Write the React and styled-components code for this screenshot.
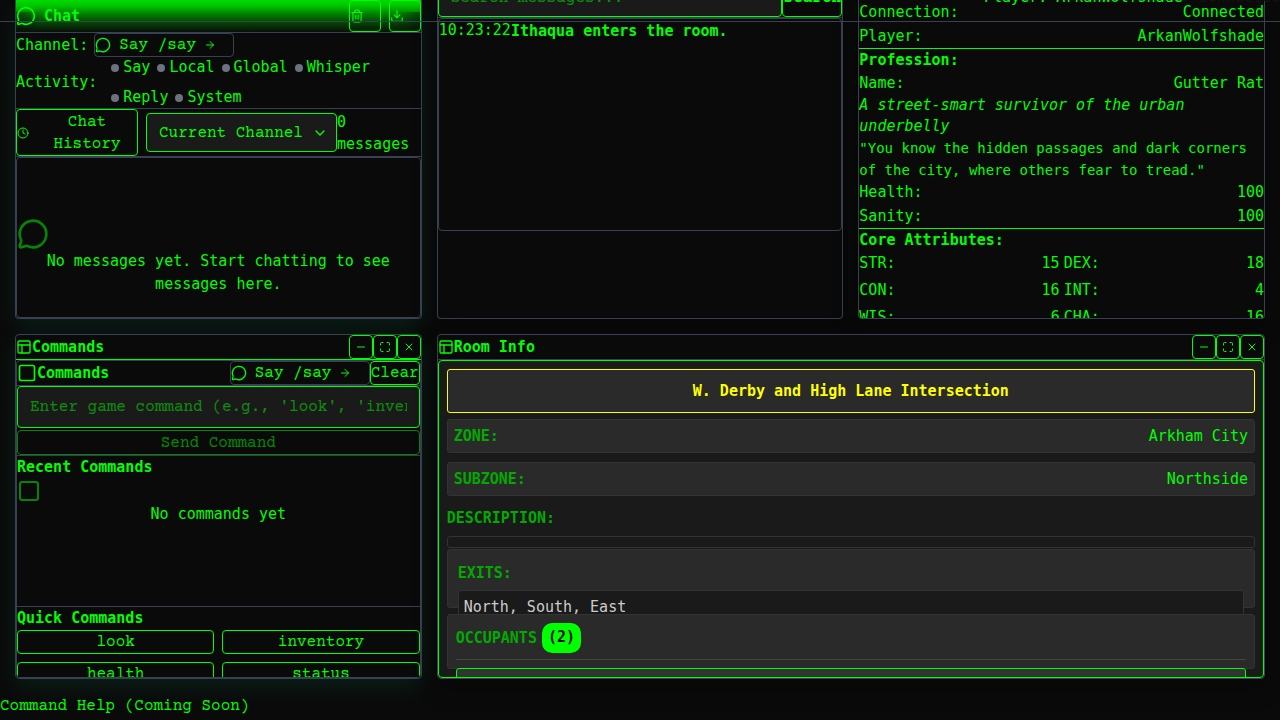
import React from "react";
import styled, { createGlobalStyle } from "styled-components";
import {
  MessageCircle, Trash2, Download, ArrowRight, Clock, ChevronDown,
  PanelsTopLeft, Minus, Maximize, X, Square,
} from "lucide-react";

const GREEN = "#00ff00";
const LINE = "#374151";
const BG = "#0a0a0a";
const SANS_MONO = '"DejaVu Sans Mono", monospace';
const SLAB_MONO = '"Courier Prime", FreeMono, "Nimbus Mono PS", "Liberation Mono", monospace';

const Global = createGlobalStyle`
  * { box-sizing: border-box; }
  body { margin: 0; background: ${BG}; color: ${GREEN}; font: 15px/23px ${SANS_MONO}; }
  button, input, select { font: 16px/22px ${SLAB_MONO}; color: ${GREEN}; }
  h2, h3, h4, p, dl, dd, dt, ul { margin: 0; padding: 0; font-size: 15px; }
  svg { flex: none; }
`;

const Page = styled.div`
  position: relative;
  height: 100vh;
  display: flex;
  flex-direction: column;
  overflow: hidden;
`;

const StatusBar = styled.header`
  position: absolute;
  inset: 0 0 auto 0;
  height: 22px;
  overflow: hidden;
  border-bottom: 1px solid ${LINE};
  display: flex;
  justify-content: flex-end;
  gap: 16px;
  pointer-events: none;
  z-index: 5;
`;

const StatusText = styled.span`
  margin-top: -14px;
  color: ${(p) => (p.$dim ? "#141414" : GREEN)};
`;

const Board = styled.main`
  flex: 1;
  min-height: 0;
  padding: 0 15px;
  display: grid;
  grid-template-columns: repeat(3, minmax(0, 1fr));
  grid-template-rows: minmax(0, 319fr) minmax(0, 345fr);
  gap: 15px;
`;

const Panel = styled.section`
  grid-column: span ${(p) => p.$span || 1};
  display: flex;
  flex-direction: column;
  min-height: 0;
  overflow: hidden;
  background: ${BG};
  border: 1px solid ${LINE};
  border-top-width: ${(p) => (p.$cut ? 0 : "1px")};
  border-radius: ${(p) => (p.$cut ? "0 0 4px 4px" : "4px")};
  box-shadow: 0 8px 24px ${(p) => (p.$glow ? "rgba(16, 185, 129, 0.12)" : "rgba(0, 0, 0, 0.3)")};
`;

const StatusPanel = styled(Panel)`
  padding-top: 1px;
`;

const ChatHeader = styled.div`
  flex: none;
  height: 33px;
  display: flex;
  align-items: center;
  gap: 8px;
  border-bottom: 1px solid ${LINE};
  background:
    linear-gradient(to right, rgba(10, 10, 10, 0.5), transparent 24px, transparent calc(100% - 24px), rgba(10, 10, 10, 0.5)) 0 12px no-repeat,
    linear-gradient(to bottom, #00dc00 0, #00c400 6px, #007800 15px, #053c05 24px, ${BG} 33px);
`;

const Title = styled.h2`
  flex: 1;
  line-height: 23px;
`;

const Button = styled.button`
  background: ${BG};
  border: 1px solid ${GREEN};
  border-radius: 4px;
  padding: 0;
  height: ${(p) => p.$height || "auto"};
  flex: none;
  opacity: ${(p) => (p.disabled ? 0.5 : 1)};
`;

const IconButton = styled(Button)`
  width: ${(p) => p.$size}px;
  height: ${(p) => p.$size}px;
  display: flex;
  align-items: center;
  justify-content: ${(p) => (p.$start ? "flex-start" : "center")};
  background: ${(p) => (p.$start ? "transparent" : BG)};
`;

const Row = styled.div`
  display: flex;
  flex: none;
  align-items: center;
  gap: ${(p) => p.$gap || 0}px;
  border-bottom: ${(p) => (p.$line ? `1px solid ${p.$line}` : "none")};
`;

const ChannelButton = styled.button`
  width: 140px;
  height: 24px;
  display: flex;
  align-items: center;
  padding: 0;
  gap: 8px;
  background: transparent;
  border: 1px solid ${LINE};
  border-radius: 4px;
`;

const ActivityList = styled.ul`
  list-style: none;
  flex: 1;
  display: flex;
  flex-wrap: wrap;
  gap: 9px 7px;
`;

const Activity = styled.li`
  display: flex;
  align-items: center;
  gap: 4px;
  line-height: 21px;
  &::before {
    content: "";
    width: 8px;
    height: 8px;
    border-radius: 50%;
    background: #6b7280;
  }
`;

const HistoryButton = styled(Button)`
  width: 122px;
  height: 47px;
  display: flex;
  align-items: center;
  gap: 8px;
  span { flex: 1; }
`;

const SelectWrap = styled.label`
  position: relative;
  display: flex;
  align-items: center;
  svg { position: absolute; right: 9px; pointer-events: none; }
`;

const Select = styled.select`
  appearance: none;
  width: 191px;
  height: 39px;
  padding: 0 12px;
  background: #1a1a1a;
  border: 1px solid ${GREEN};
  border-radius: 4px;
`;

const MessageCount = styled.span`
  line-height: 22px;
`;

const MessageArea = styled.div`
  flex: 1;
  display: flex;
  flex-direction: column;
  justify-content: center;
  border: 1px solid ${LINE};
  border-radius: 4px;
  padding-top: 38px;
`;

const Faded = styled.div`
  display: flex;
  opacity: 0.5;
`;

const EmptyNote = styled.p`
  text-align: center;
  padding: 0 16px;
`;

const TextInput = styled.input`
  flex: 1;
  min-width: 0;
  height: 42px;
  padding: 0 12px;
  background: #1a1a1a;
  border: 1px solid ${GREEN};
  border-radius: 4px;
  &::placeholder { color: ${GREEN}; opacity: 0.5; }
`;

const SearchRow = styled.div`
  display: flex;
  flex: none;
  margin-top: -25px;
  border-bottom: 1px solid ${LINE};
  ${TextInput} { padding-top: 4px; }
`;

const SearchButton = styled(Button)`
  width: 60px;
  padding-top: 3px;
  overflow: hidden;
  font-weight: 700;
`;

const Log = styled.div`
  flex: none;
  height: 67%;
  display: flex;
  align-items: flex-start;
  border: 1px solid ${LINE};
  border-radius: 4px;
  strong { padding-top: 1px; }
`;

const Group = styled.div`
  flex: none;
  display: flex;
  flex-direction: column;
  gap: ${(p) => p.$gap || 0}px;
  border-bottom: ${(p) => (p.$line ? `1px solid ${GREEN}` : "none")};
`;

const Stat = styled.dl`
  display: flex;
  justify-content: space-between;
`;

const StatGrid = styled.div`
  display: grid;
  grid-template-columns: 1fr 1fr;
  gap: 4px;
`;

const Description = styled.p`
  font-style: italic;
  line-height: 21px;
`;

const Quote = styled.p`
  font-size: 14px;
  line-height: 22px;
`;

const CommandBody = styled.div`
  flex: 1;
  min-height: 0;
  display: flex;
  flex-direction: column;
  border: 1px solid ${LINE};
  border-radius: 4px;
  overflow: hidden;
`;

const CommandForm = styled.form`
  flex: none;
  display: flex;
  flex-direction: column;
  gap: 2px;
  border-bottom: 1px solid ${LINE};
  input { flex: none; }
`;

const Recent = styled.div`
  flex: 1;
  min-height: 0;
  border-bottom: 1px solid ${LINE};
`;

const Quick = styled.div`
  flex: none;
  height: 70px;
`;

const QuickGrid = styled.div`
  display: grid;
  grid-template-columns: 1fr 1fr;
  gap: 8px;
`;

const RoomBody = styled.div`
  flex: 1;
  min-height: 0;
  overflow: hidden;
  padding: 8px;
  display: flex;
  flex-direction: column;
  background: #1a1a1a;
  border: 1px solid ${GREEN};
  border-radius: 4px;
`;

const RoomTitle = styled.h3`
  flex: none;
  padding: 10px;
  margin-bottom: 6px;
  line-height: 22px;
  text-align: center;
  color: #ffff00;
  background: #2a2a2a;
  border: 1px solid #ffff00;
  border-radius: 3px;
`;

const Field = styled.dl`
  flex: none;
  display: flex;
  justify-content: space-between;
  padding: 5px 6px 4px;
  margin-bottom: 9px;
  background: #2a2a2a;
  border: 1px solid #333;
  border-radius: 3px;
`;

const Label = styled.dt`
  font-weight: 700;
  color: #00aa00;
`;

const DescriptionBox = styled.div`
  flex: none;
  height: 12px;
  margin: 6px 0 1px;
  border: 1px solid #333;
  border-radius: 3px;
`;

const DescriptionLabel = styled.h4`
  padding-top: 2px;
  color: #00aa00;
`;

const Exits = styled.div`
  flex: none;
  height: 59px;
  margin-bottom: 6px;
  padding: 12px 10px;
  background: #2a2a2a;
  border: 1px solid #333;
  border-radius: 3px;
`;

const ExitList = styled.p`
  margin-top: 5px;
  padding: 5px;
  color: #cccccc;
  background: #1a1a1a;
  border: 1px solid #333;
  border-radius: 3px;
`;

const Occupants = styled.div`
  flex: none;
  position: relative;
  height: 55px;
  padding: 8px;
  background: #2a2a2a;
  border: 1px solid #333;
  border-radius: 3px;
`;

const OccupantsHead = styled.div`
  display: flex;
  align-items: center;
  gap: 5px;
  padding-bottom: 6px;
  margin-bottom: 8px;
  border-bottom: 1px solid #444;
`;

const Count = styled.span`
  padding: 3px 6px 4px;
  border-radius: 10px;
  font-weight: 700;
  color: ${BG};
  background: ${GREEN};
`;

const Occupant = styled.div`
  height: 40px;
  background: #333;
  border: 1px solid ${GREEN};
  border-radius: 3px;
`;

const Footer = styled.footer`
  padding: 15px 0 2px;
  font: 16px/24px ${SLAB_MONO};
`;

function ChannelPicker() {
  return (
    <ChannelButton type="button">
      <MessageCircle size={16} />
      <span>Say /say</span>
      <ArrowRight size={12} />
    </ChannelButton>
  );
}

function WindowHeader({ title, line }) {
  return (
    <Row $line={line}>
      <PanelsTopLeft size={16} />
      <Title>{title}</Title>
      <IconButton $size={24} aria-label="Minimize"><Minus size={12} /></IconButton>
      <IconButton $size={24} aria-label="Maximize"><Maximize size={12} /></IconButton>
      <IconButton $size={24} aria-label="Close"><X size={12} /></IconButton>
    </Row>
  );
}

function StatRow({ name, value }) {
  return <Stat><dt>{name}:</dt><dd>{value}</dd></Stat>;
}

const ACTIVITIES = ["Say", "Local", "Global", "Whisper", "Reply", "System"];
const ATTRIBUTES = [["STR", 15], ["DEX", 18], ["CON", 16], ["INT", 4], ["WIS", 6], ["CHA", 16]];
const QUICK = ["look", "inventory", "health", "status"];

export default function App() {
  return (
    <Page>
      <Global />
      <StatusBar>
        <StatusText>Player: ArkanWolfshade</StatusText>
        <StatusText $dim>Connected</StatusText>
      </StatusBar>
      <Board>
        <Panel $cut $glow>
          <ChatHeader>
            <MessageCircle size={20} />
            <Title>Chat</Title>
            <IconButton $size={32} $start aria-label="Clear chat"><Trash2 size={14} /></IconButton>
            <IconButton $size={32} $start aria-label="Download chat"><Download size={14} /></IconButton>
          </ChatHeader>
          <Row $gap={6}>
            <span>Channel:</span>
            <ChannelPicker />
          </Row>
          <Row $gap={14} $line={LINE}>
            <span>Activity:</span>
            <ActivityList>
              {ACTIVITIES.map((a) => <Activity key={a}>{a}</Activity>)}
            </ActivityList>
          </Row>
          <Row $line={LINE}>
            <Row $gap={8}>
              <HistoryButton><Clock size={12} /><span>Chat History</span></HistoryButton>
              <SelectWrap>
                <Select aria-label="History filter" defaultValue="current">
                  <option value="current">Current Channel</option>
                </Select>
                <ChevronDown size={16} />
              </SelectWrap>
            </Row>
            <MessageCount>0 messages</MessageCount>
          </Row>
          <MessageArea>
            <Faded><MessageCircle size={32} /></Faded>
            <EmptyNote>No messages yet. Start chatting to see messages here.</EmptyNote>
          </MessageArea>
        </Panel>

        <Panel $cut>
          <SearchRow>
            <TextInput aria-label="Search messages" placeholder="Search messages..." />
            <SearchButton>Search</SearchButton>
          </SearchRow>
          <Log>
            <time>10:23:22</time>
            <strong>Ithaqua enters the room.</strong>
          </Log>
        </Panel>

        <StatusPanel $cut>
          <Group $gap={1} $line>
            <StatRow name="Connection" value="Connected" />
            <StatRow name="Player" value="ArkanWolfshade" />
          </Group>
          <Group>
            <h4>Profession:</h4>
            <StatRow name="Name" value="Gutter Rat" />
            <Description>A street-smart survivor of the urban underbelly</Description>
            <Quote>"You know the hidden passages and dark corners of the city, where others fear to tread."</Quote>
          </Group>
          <Group $gap={1} $line>
            <StatRow name="Health" value="100" />
            <StatRow name="Sanity" value="100" />
          </Group>
          <h4>Core Attributes:</h4>
          <StatGrid>
            {ATTRIBUTES.map(([n, v]) => <StatRow key={n} name={n} value={v} />)}
          </StatGrid>
        </StatusPanel>

        <Panel $glow>
          <WindowHeader title="Commands" line={GREEN} />
          <CommandBody>
            <Row $line={LINE}>
              <Square size={20} />
              <Title>Commands</Title>
              <ChannelPicker />
              <Button $height="24px">Clear</Button>
            </Row>
            <CommandForm onSubmit={(e) => e.preventDefault()}>
              <TextInput aria-label="Game command" placeholder="Enter game command (e.g., 'look', 'inventory', 'go north')" />
              <Button $height="25px" disabled>Send Command</Button>
            </CommandForm>
            <Recent>
              <h3>Recent Commands</h3>
              <Faded><Square size={24} /></Faded>
              <EmptyNote>No commands yet</EmptyNote>
            </Recent>
            <Quick>
              <h3>Quick Commands</h3>
              <QuickGrid>
                {QUICK.map((q) => <Button key={q} $height="24px">{q}</Button>)}
              </QuickGrid>
            </Quick>
          </CommandBody>
        </Panel>

        <Panel $span={2}>
          <WindowHeader title="Room Info" line={LINE} />
          <RoomBody>
            <RoomTitle>W. Derby and High Lane Intersection</RoomTitle>
            <Field><Label>ZONE:</Label><dd>Arkham City</dd></Field>
            <Field><Label>SUBZONE:</Label><dd>Northside</dd></Field>
            <DescriptionLabel>DESCRIPTION:</DescriptionLabel>
            <DescriptionBox />
            <Exits>
              <Label as="h4">EXITS:</Label>
              <ExitList>North, South, East</ExitList>
            </Exits>
            <Occupants>
              <OccupantsHead>
                <Label as="h4">OCCUPANTS</Label>
                <Count>(2)</Count>
              </OccupantsHead>
              <Occupant />
            </Occupants>
          </RoomBody>
        </Panel>
      </Board>
      <Footer>Command Help (Coming Soon)</Footer>
    </Page>
  );
}
